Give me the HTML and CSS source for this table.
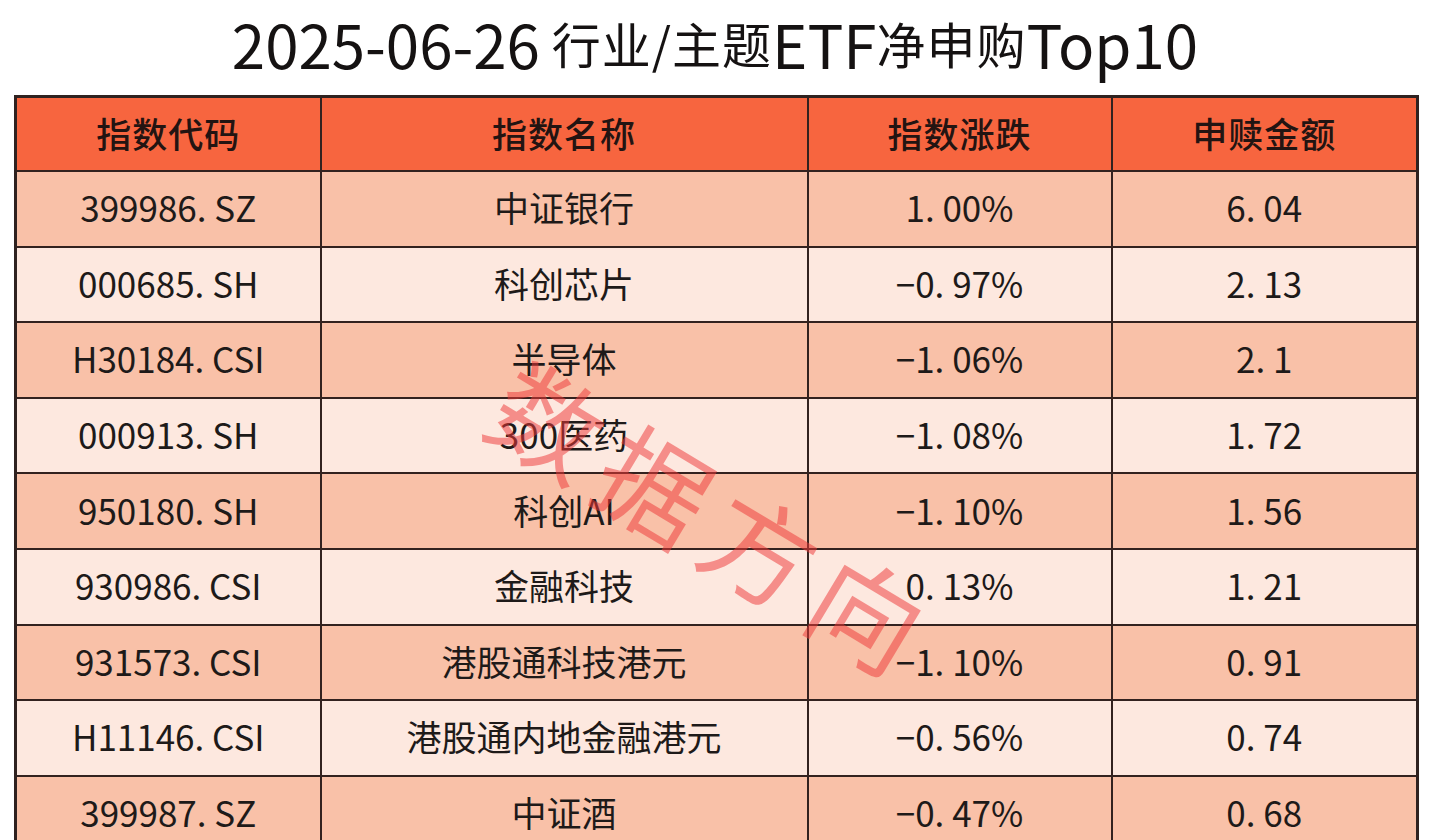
FILE: index.html
```html
<!DOCTYPE html>
<html lang="zh-CN">
<head>
<meta charset="utf-8">
<title>2025-06-26 行业/主题ETF净申购Top10</title>
<link rel="stylesheet" href="styles.css">
</head>
<body>
<div class="page">
  <h1 class="title"><span class="lat">2025-06-26</span> 行业/主题<span class="lat">ETF</span>净申购<span class="lat">Top10</span></h1>
  <div class="table-wrap">
    <table class="data">
      <colgroup>
        <col class="c1"><col class="c2"><col class="c3"><col class="c4">
      </colgroup>
      <thead>
        <tr><th>指数代码</th><th>指数名称</th><th>指数涨跌</th><th>申赎金额</th></tr>
      </thead>
      <tbody>
        <tr><td>399986. SZ</td><td>中证银行</td><td>1. 00%</td><td>6. 04</td></tr>
        <tr><td>000685. SH</td><td>科创芯片</td><td>−0. 97%</td><td>2. 13</td></tr>
        <tr><td>H30184. CSI</td><td>半导体</td><td>−1. 06%</td><td>2. 1</td></tr>
        <tr><td>000913. SH</td><td>300医药</td><td>−1. 08%</td><td>1. 72</td></tr>
        <tr><td>950180. SH</td><td>科创AI</td><td>−1. 10%</td><td>1. 56</td></tr>
        <tr><td>930986. CSI</td><td>金融科技</td><td>0. 13%</td><td>1. 21</td></tr>
        <tr><td>931573. CSI</td><td>港股通科技港元</td><td>−1. 10%</td><td>0. 91</td></tr>
        <tr><td>H11146. CSI</td><td>港股通内地金融港元</td><td>−0. 56%</td><td>0. 74</td></tr>
        <tr><td>399987. SZ</td><td>中证酒</td><td>−0. 47%</td><td>0. 68</td></tr>
      </tbody>
    </table>
    <div class="watermark">数据方向</div>
  </div>
</div>
</body>
</html>
```
FILE: styles.css
```css
html, body {
  margin: 0;
  padding: 0;
  background: #ffffff;
  overflow: hidden;
}

.page {
  width: 1430px;
  height: 840px;
  overflow: hidden;
  font-family: "Noto Sans CJK SC", "Noto Sans", sans-serif;
  color: #1f1a19;
}

.title {
  margin: 0;
  height: 95px;
  display: flex;
  align-items: center;
  justify-content: center;
  font-size: 49px;
  font-weight: 400;
  color: #151212;
  padding-bottom: 10px;
  box-sizing: border-box;
  white-space: pre;
  letter-spacing: 1px;
}

.title .lat {
  font-size: 60px;
  letter-spacing: 0;
}

.table-wrap {
  position: relative;
  padding: 0 14px;
}

.data {
  width: 1402px;
  border-collapse: collapse;
  table-layout: fixed;
  border: 3px solid #2f2220;
}

.data .c1 { width: 305px; }
.data .c2 { width: 487px; }
.data .c3 { width: 304px; }
.data .c4 { width: 306px; }

.data th,
.data td {
  border: 2px solid #33221f;
  text-align: center;
  vertical-align: middle;
  padding: 0 0 4px;
  white-space: nowrap;
  font-size: 35px;
}

.data th {
  height: 68px;
  background: #f7653f;
  font-weight: 500;
  color: #231412;
  letter-spacing: 1px;
}

.data td {
  height: 69.6px;
  font-weight: 400;
  color: #1e1a19;
  letter-spacing: 0;
}

.data tbody tr:nth-child(odd) td {
  background: #f9c1a8;
}

.data tbody tr:nth-child(even) td {
  background: #fde8df;
}

.watermark {
  position: absolute;
  left: 716px;
  top: 422px;
  transform: translate(-50%, -50%) rotate(31deg);
  font-size: 110px;
  font-weight: 400;
  letter-spacing: 14px;
  color: rgba(238, 58, 58, 0.52);
  white-space: nowrap;
  pointer-events: none;
  line-height: 1;
}
```
